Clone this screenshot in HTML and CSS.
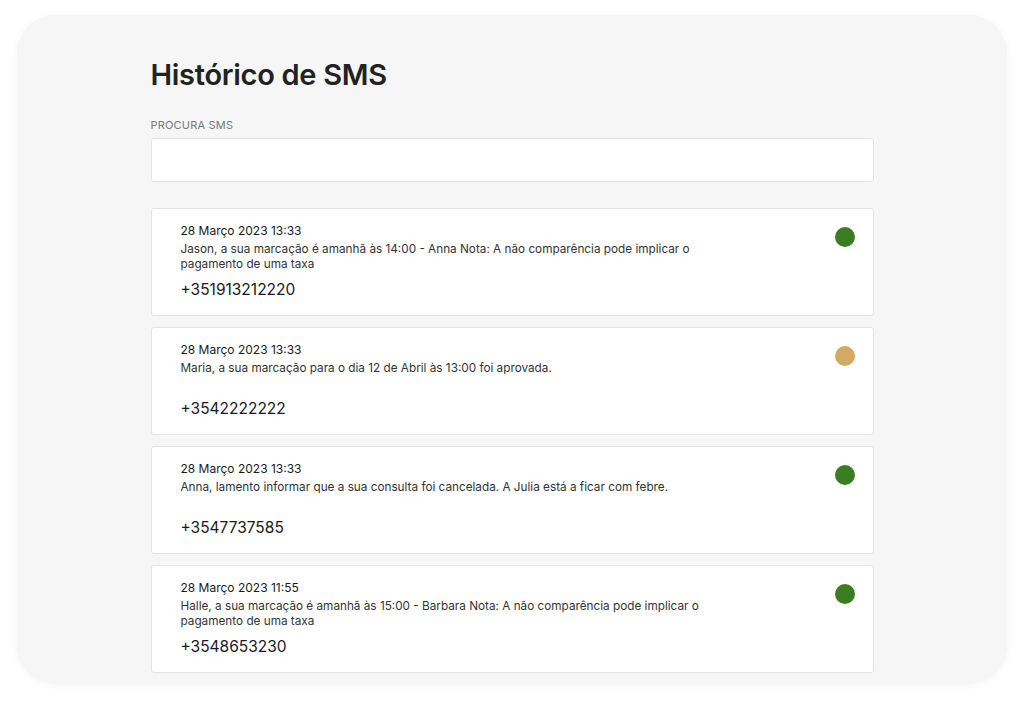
FILE: index.html
```html
<!DOCTYPE html>
<html lang="pt">
<head>
<meta charset="utf-8">
<title>Histórico de SMS</title>
<link rel="stylesheet" href="styles.css">
</head>
<body>
<div class="frame">
  <main class="content">
    <h1 class="title">Histórico de SMS</h1>
    <label class="label" for="search">PROCURA SMS</label>
    <input class="search" id="search" type="text">
    <ul class="list">
      <li class="card">
        <div class="card-body">
          <div class="date">28 Março 2023 13:33</div>
          <p class="msg">Jason, a sua marcação é amanhã às 14:00 - Anna Nota: A não comparência pode implicar o pagamento de uma taxa</p>
          <div class="phone">+351913212220</div>
        </div>
        <span class="dot green"></span>
      </li>
      <li class="card">
        <div class="card-body">
          <div class="date">28 Março 2023 13:33</div>
          <p class="msg">Maria, a sua marcação para o dia 12 de Abril às 13:00 foi aprovada.</p>
          <div class="phone">+3542222222</div>
        </div>
        <span class="dot amber"></span>
      </li>
      <li class="card">
        <div class="card-body">
          <div class="date">28 Março 2023 13:33</div>
          <p class="msg">Anna, lamento informar que a sua consulta foi cancelada. A Julia está a ficar com febre.</p>
          <div class="phone">+3547737585</div>
        </div>
        <span class="dot green"></span>
      </li>
      <li class="card">
        <div class="card-body">
          <div class="date">28 Março 2023 11:55</div>
          <p class="msg">Halle, a sua marcação é amanhã às 15:00 - Barbara Nota: A não comparência pode implicar o pagamento de uma taxa</p>
          <div class="phone">+3548653230</div>
        </div>
        <span class="dot green"></span>
      </li>
    </ul>
  </main>
</div>
</body>
</html>
```
FILE: styles.css
```css
* { box-sizing: border-box; }
html, body { margin: 0; padding: 0; background: #ffffff; }
body {
  font-family: Inter, "Noto Sans", "Liberation Sans", sans-serif;
  color: #1f1f1f;
  padding: 15px 17px 19px 17px;
  height: 702px;
  overflow: hidden;
}
.frame {
  height: 668px;
  background: #f6f6f6;
  border-radius: 40px;
  box-shadow: 0 2px 10px rgba(0,0,0,0.05), 0 0 1px rgba(0,0,0,0.06);
  overflow: hidden;
  display: flex;
  justify-content: center;
}
.content {
  width: 723px;
  padding-top: 42px;
  display: flex;
  flex-direction: column;
}
.title {
  margin: 0;
  font-size: 29px;
  font-weight: 600;
  line-height: 36px;
  letter-spacing: -0.3px;
  color: #222;
}
.label {
  margin-top: 25px;
  font-size: 11px;
  line-height: 14px;
  color: #777;
  letter-spacing: 0.2px;
}
.search {
  margin-top: 6px;
  height: 44px;
  border: 1px solid #e3e3e3;
  border-radius: 3px;
  background: #fff;
  outline: none;
  font: inherit;
}
.list {
  list-style: none;
  margin: 26px 0 0 0;
  padding: 0;
  display: flex;
  flex-direction: column;
  gap: 11px;
}
.card {
  display: flex;
  justify-content: space-between;
  align-items: flex-start;
  height: 108px;
  background: #fff;
  border: 1px solid #e3e3e3;
  border-radius: 3px;
  padding: 14px 18px 0 29px;
}
.card-body { width: 560px; }
.date {
  font-size: 12px;
  line-height: 16px;
  color: #1a1a1a;
}
.msg {
  margin: 3px 0 0 0;
  font-size: 11.75px;
  line-height: 15px;
  min-height: 30px;
  color: #333;
  max-width: 540px;
}
.phone {
  margin-top: 8px;
  font-size: 15.5px;
  line-height: 20px;
  color: #1a1a1a;
}
.dot {
  width: 20px;
  height: 20px;
  border-radius: 50%;
  margin-top: 4px;
  flex: none;
}
.green { background: #3a7d23; }
.amber { background: #d4a962; }
```
